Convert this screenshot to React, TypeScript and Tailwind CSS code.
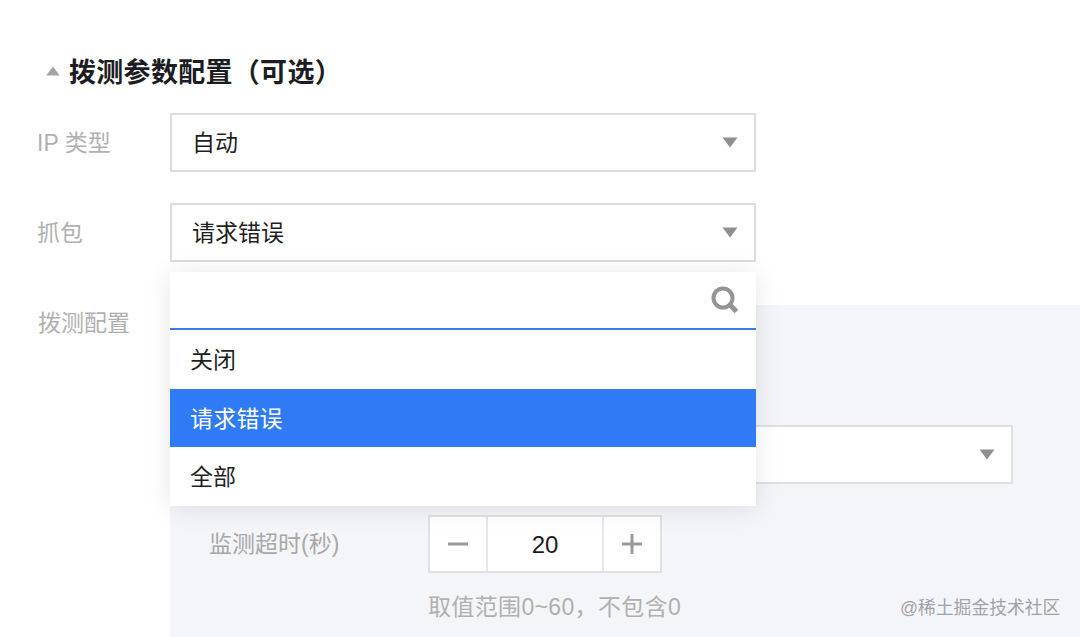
function Caret({ className }: { className: string }) {
  return (
    <svg viewBox="0 0 16 11" className={className} aria-hidden>
      <path d="M0.5 0.5 H15.5 L8 10.5 Z" fill="#8f8f8f" />
    </svg>
  );
}

function Select({ value, className }: { value?: string; className: string }) {
  return (
    <div
      className={`flex h-[59px] items-center justify-between border-2 border-[#dcdde0] bg-white pr-[16px] pl-[20px] text-[23px] text-[#1f1f1f] ${className}`}
    >
      <span className="pt-[2px]">{value}</span>
      <Caret className="h-[11px] w-[16px]" />
    </div>
  );
}

function Row({ label, children }: { label: string; children: React.ReactNode }) {
  return (
    <div className="flex items-center">
      <div className="w-[133px] pt-[2px] text-[23px] text-[#b0b0b0]">{label}</div>
      {children}
    </div>
  );
}

export default function App() {
  return (
    <div className="relative h-[637px] w-[1080px] overflow-hidden bg-white font-['Liberation_Sans','Noto_Sans_CJK_SC',sans-serif]">
      {/* section title */}
      <div className="flex items-center pt-[53px] pl-[45px]">
        <svg viewBox="0 0 16 11" className="mr-[8px] mb-[4px] h-[10px] w-[16px]" aria-hidden>
          <path d="M8 0.5 L15.5 10.5 H0.5 Z" fill="#a3a3a3" />
        </svg>
        <h2 className="text-[27px] leading-[40px] font-bold tracking-[0.3px] text-[#1c1c24]">拨测参数配置（可选）</h2>
      </div>

      <div className="flex flex-col gap-[31px] pt-[20px] pl-[37px]">
        <Row label="IP 类型">
          <Select value="自动" className="w-[586px]" />
        </Row>
        <Row label="抓包">
          <Select value="请求错误" className="w-[586px]" />
        </Row>
      </div>

      {/* probe config: label + grey panel */}
      <div className="mt-[43px] flex">
        <div className="w-[170px] pt-[1px] pl-[38px] text-[23px] leading-[34px] text-[#b0b0b0]">拨测配置</div>
        <div className="h-[332px] flex-1 bg-[#f4f5f9] pt-[120px] pl-[39px]">
          <div className="flex">
            <div className="w-[219px]" />
            <Select className="w-[585px] border-[#dfe0e4]" />
          </div>
          <div className="mt-[31px] flex items-center">
            <div className="w-[219px] text-[23px] text-[#a8a8a8]">监测超时(秒)</div>
            <div className="flex h-[58px] w-[234px] border-2 border-[#dfe0e4] bg-white">
              <div className="flex w-[58px] items-center justify-center border-r-2 border-[#e6e7ea]">
                <svg viewBox="0 0 20 20" className="h-[20px] w-[20px]" aria-hidden>
                  <path d="M0 8.5 H20 V11.5 H0 Z" fill="#999999" />
                </svg>
              </div>
              <div className="flex flex-1 items-center justify-center pt-[2px] text-[24px] text-[#1a1a1a]">20</div>
              <div className="flex w-[58px] items-center justify-center border-l-2 border-[#e6e7ea]">
                <svg viewBox="0 0 20 20" className="h-[20px] w-[20px]" aria-hidden>
                  <path d="M8.5 0 H11.5 V8.5 H20 V11.5 H11.5 V20 H8.5 V11.5 H0 V8.5 H8.5 Z" fill="#999999" />
                </svg>
              </div>
            </div>
          </div>
          <div className="mt-[17px] ml-[219px] text-[23px] leading-[34px] tracking-[0.35px] text-[#b0b0b0]">取值范围0~60，不包含0</div>
        </div>
      </div>

      {/* open dropdown */}
      <div className="absolute top-[272px] left-[170px] w-[586px] bg-white text-[23px] text-[#1f1f1f] shadow-[0_2px_24px_rgba(0,0,0,0.1)]">
        <div className="flex h-[58px] items-center justify-end border-b-2 border-[#3b7de8] pr-[17px]">
          <svg viewBox="0 0 28 28" className="h-[28px] w-[28px]" aria-hidden>
            <circle cx="12" cy="12" r="9.5" fill="none" stroke="#949494" strokeWidth="4" />
            <path d="M18.5 18.5 L25.5 25.5" stroke="#949494" strokeWidth="5" />
          </svg>
        </div>
        <div className="flex h-[59px] items-center pt-[2px] pl-[20px]">关闭</div>
        <div className="flex h-[58px] items-center bg-[#2f7bf5] pt-[2px] pl-[20px] tracking-[0.2px] text-white">请求错误</div>
        <div className="flex h-[59px] items-center pt-[2px] pl-[20px]">全部</div>
      </div>

      {/* watermark */}
      <div className="absolute top-[595px] left-[900px] text-[17.8px] leading-[26px] whitespace-nowrap text-[#a2a2a6]">@稀土掘金技术社区</div>
    </div>
  );
}
